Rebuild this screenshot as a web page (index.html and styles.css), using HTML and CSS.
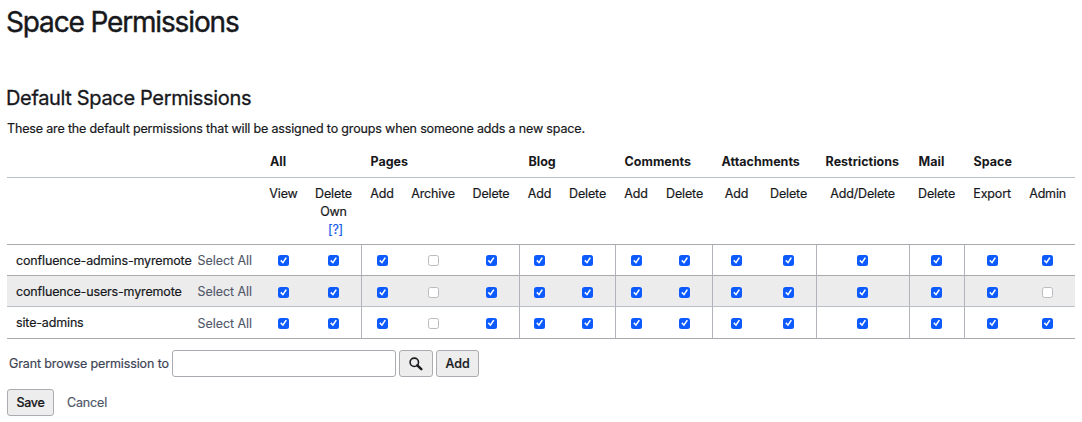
FILE: index.html
```html
<!DOCTYPE html>
<html lang="en">
<head>
<meta charset="utf-8">
<title>Space Permissions</title>
<link rel="stylesheet" href="styles.css">
</head>
<body>
<main class="page">
<h1 class="title">Space Permissions</h1>
<h2 class="subtitle">Default Space Permissions</h2>
<p class="intro">These are the default permissions that will be assigned to groups when someone adds a new space.</p>
<form>
<table class="permissions">
<colgroup>
<col class="w187"><col class="w67"><col class="w45"><col class="w55"><col class="w42"><col class="w60"><col class="w56"><col class="w41"><col class="w55"><col class="w42"><col class="w55"><col class="w49"><col class="w55"><col class="w93"><col class="w55"><col class="w56"><col class="w55">
</colgroup>
<thead>
<tr class="sections"><th colspan="2"></th><th colspan="2">All</th><th class="sec" colspan="3">Pages</th><th class="sec" colspan="2">Blog</th><th class="sec" colspan="2">Comments</th><th class="sec" colspan="2">Attachments</th><th class="sec">Restrictions</th><th class="sec">Mail</th><th class="sec" colspan="2">Space</th></tr>
<tr class="actions"><td colspan="2"></td><td>View</td><td>Delete<br>Own<br><a class="help" href="#">[?]</a></td><td>Add</td><td>Archive</td><td>Delete</td><td>Add</td><td>Delete</td><td>Add</td><td>Delete</td><td>Add</td><td>Delete</td><td>Add/Delete</td><td>Delete</td><td>Export</td><td>Admin</td></tr>
</thead>
<tbody>
<tr><td class="group">confluence-admins-myremote</td><td class="select"><a href="#">Select All</a></td><td><input type="checkbox" checked></td><td><input type="checkbox" checked></td><td class="first"><input type="checkbox" checked></td><td><input type="checkbox"></td><td><input type="checkbox" checked></td><td class="first tight"><input type="checkbox" checked></td><td><input type="checkbox" checked></td><td class="first"><input type="checkbox" checked></td><td><input type="checkbox" checked></td><td class="first tight"><input type="checkbox" checked></td><td><input type="checkbox" checked></td><td class="first tight"><input type="checkbox" checked></td><td class="first tight"><input type="checkbox" checked></td><td class="first"><input type="checkbox" checked></td><td class="tight"><input type="checkbox" checked></td></tr>
<tr class="shaded"><td class="group">confluence-users-myremote</td><td class="select"><a href="#">Select All</a></td><td><input type="checkbox" checked></td><td><input type="checkbox" checked></td><td class="first"><input type="checkbox" checked></td><td><input type="checkbox"></td><td><input type="checkbox" checked></td><td class="first tight"><input type="checkbox" checked></td><td><input type="checkbox" checked></td><td class="first"><input type="checkbox" checked></td><td><input type="checkbox" checked></td><td class="first tight"><input type="checkbox" checked></td><td><input type="checkbox" checked></td><td class="first tight"><input type="checkbox" checked></td><td class="first tight"><input type="checkbox" checked></td><td class="first"><input type="checkbox" checked></td><td class="tight"><input type="checkbox"></td></tr>
<tr><td class="group">site-admins</td><td class="select"><a href="#">Select All</a></td><td><input type="checkbox" checked></td><td><input type="checkbox" checked></td><td class="first"><input type="checkbox" checked></td><td><input type="checkbox"></td><td><input type="checkbox" checked></td><td class="first tight"><input type="checkbox" checked></td><td><input type="checkbox" checked></td><td class="first"><input type="checkbox" checked></td><td><input type="checkbox" checked></td><td class="first tight"><input type="checkbox" checked></td><td><input type="checkbox" checked></td><td class="first tight"><input type="checkbox" checked></td><td class="first tight"><input type="checkbox" checked></td><td class="first"><input type="checkbox" checked></td><td class="tight"><input type="checkbox" checked></td></tr>
</tbody>
</table>
<div class="grant">
<label class="grant-label" for="groups">Grant browse permission to</label>
<input class="field" id="groups" type="text">
<button class="button search" type="button" aria-label="Search"><svg width="14" height="14" viewBox="0 0 14 14"><circle cx="5.3" cy="5.3" r="4.2" fill="none" stroke="#1b1c20" stroke-width="1.6"/><path d="M8.3 8.3 12.3 12.2" stroke="#1b1c20" stroke-width="2.5" stroke-linecap="round"/></svg></button>
<button class="button add" type="button">Add</button>
</div>
<div class="footer">
<button class="button save" type="button">Save</button>
<a class="cancel" href="#">Cancel</a>
</div>
</form>
</main>
</body>
</html>
```

FILE: styles.css
```css
* { box-sizing: border-box; }
body { margin: 0; background: #fff; color: #17181c; font: 12.5px/18px Inter, "Liberation Sans", sans-serif; letter-spacing: -0.155px; -webkit-text-stroke: 0.2px; }
a { color: #505768; text-decoration: none; }
.page { width: 1082px; height: 422px; padding: 4px 7px 0; overflow: hidden; }
.title { margin: 0 0 0 -1px; font-size: 28px; line-height: 36px; font-weight: 400; letter-spacing: -1.15px; -webkit-text-stroke: 0.4px; }
.subtitle { margin: 44px 0 0 -1px; font-size: 20px; line-height: 28px; font-weight: 400; letter-spacing: -0.34px; -webkit-text-stroke: 0.3px; }
.intro { margin: 8px 0 0; height: 18px; white-space: nowrap; }
.permissions { width: 1068px; margin-top: 7px; table-layout: fixed; border-collapse: separate; border-spacing: 0; }
.w187 { width: 187px; } .w67 { width: 67px; } .w45 { width: 45px; } .w55 { width: 55px; }
.w42 { width: 42px; } .w60 { width: 60px; } .w56 { width: 56px; } .w41 { width: 41px; }
.w49 { width: 49px; } .w93 { width: 93px; }
.permissions th, .permissions td { padding: 0; white-space: nowrap; text-align: center; }
.permissions .sections th { height: 33px; padding: 2px 0 0 9px; text-align: left; font-weight: 700; letter-spacing: 0; -webkit-text-stroke: 0; border-bottom: 1px solid #b9bec7; }
.permissions .sections .sec { padding-left: 9.5px; }
.permissions .actions td { height: 67px; vertical-align: top; padding-top: 7px; border-bottom: 1px solid #a9aaad; }
.actions .help { color: #1558e8; margin-left: 4px; }
tbody td { height: 31px; border-bottom: 1px solid #a9aaad; line-height: 18px; }
tbody tr:last-child td { height: 32px; }
tbody .first { border-left: 1px solid #b0b3ba; }
.permissions .tight { padding-right: 1px; }
.shaded td { background: #ececec; border-bottom-color: #b9bec7; }
.permissions .group { text-align: left; padding: 1px 0 0 9px; }
.permissions .select { text-align: left; padding: 2px 0 0 3.5px; letter-spacing: -0.06px; -webkit-text-stroke: 0.1px; }
input[type="checkbox"] { appearance: none; display: block; width: 11px; height: 11px; margin: 1px auto 0; border: 1px solid #b9bbc0; border-radius: 2.5px; background: #fff; }
.shaded input[type="checkbox"] { margin-top: 3px; }
input[type="checkbox"]:checked { border: 0; background: #0d5bff; }
input[type="checkbox"]:checked::before { content: ""; display: block; width: 11px; height: 11px; background: #fff; clip-path: polygon(20% 54%, 31% 44%, 43% 58%, 69% 20%, 81% 28%, 46% 80%); }
.grant { display: flex; align-items: center; height: 27px; margin-top: 11px; padding-left: 2px; color: #3d4455; }
.grant-label { width: 163px; white-space: nowrap; letter-spacing: -0.12px; }
.field { width: 224px; height: 27px; margin: 0; border: 1px solid #a9abb0; border-radius: 3px; background: #fff; }
.button { display: flex; align-items: center; justify-content: center; height: 27px; margin: 0; padding: 0; border: 1px solid #aaacb1; border-radius: 3px; background: #ededed; color: #17181c; font: inherit; font-weight: 500; }
.search { width: 34px; margin-left: 3px; }
.add { width: 43px; margin-left: 3px; }
.footer { display: flex; align-items: center; height: 27px; margin-top: 12px; }
.save { width: 47px; letter-spacing: -0.3px; }
.cancel { margin-left: 13px; }
```
